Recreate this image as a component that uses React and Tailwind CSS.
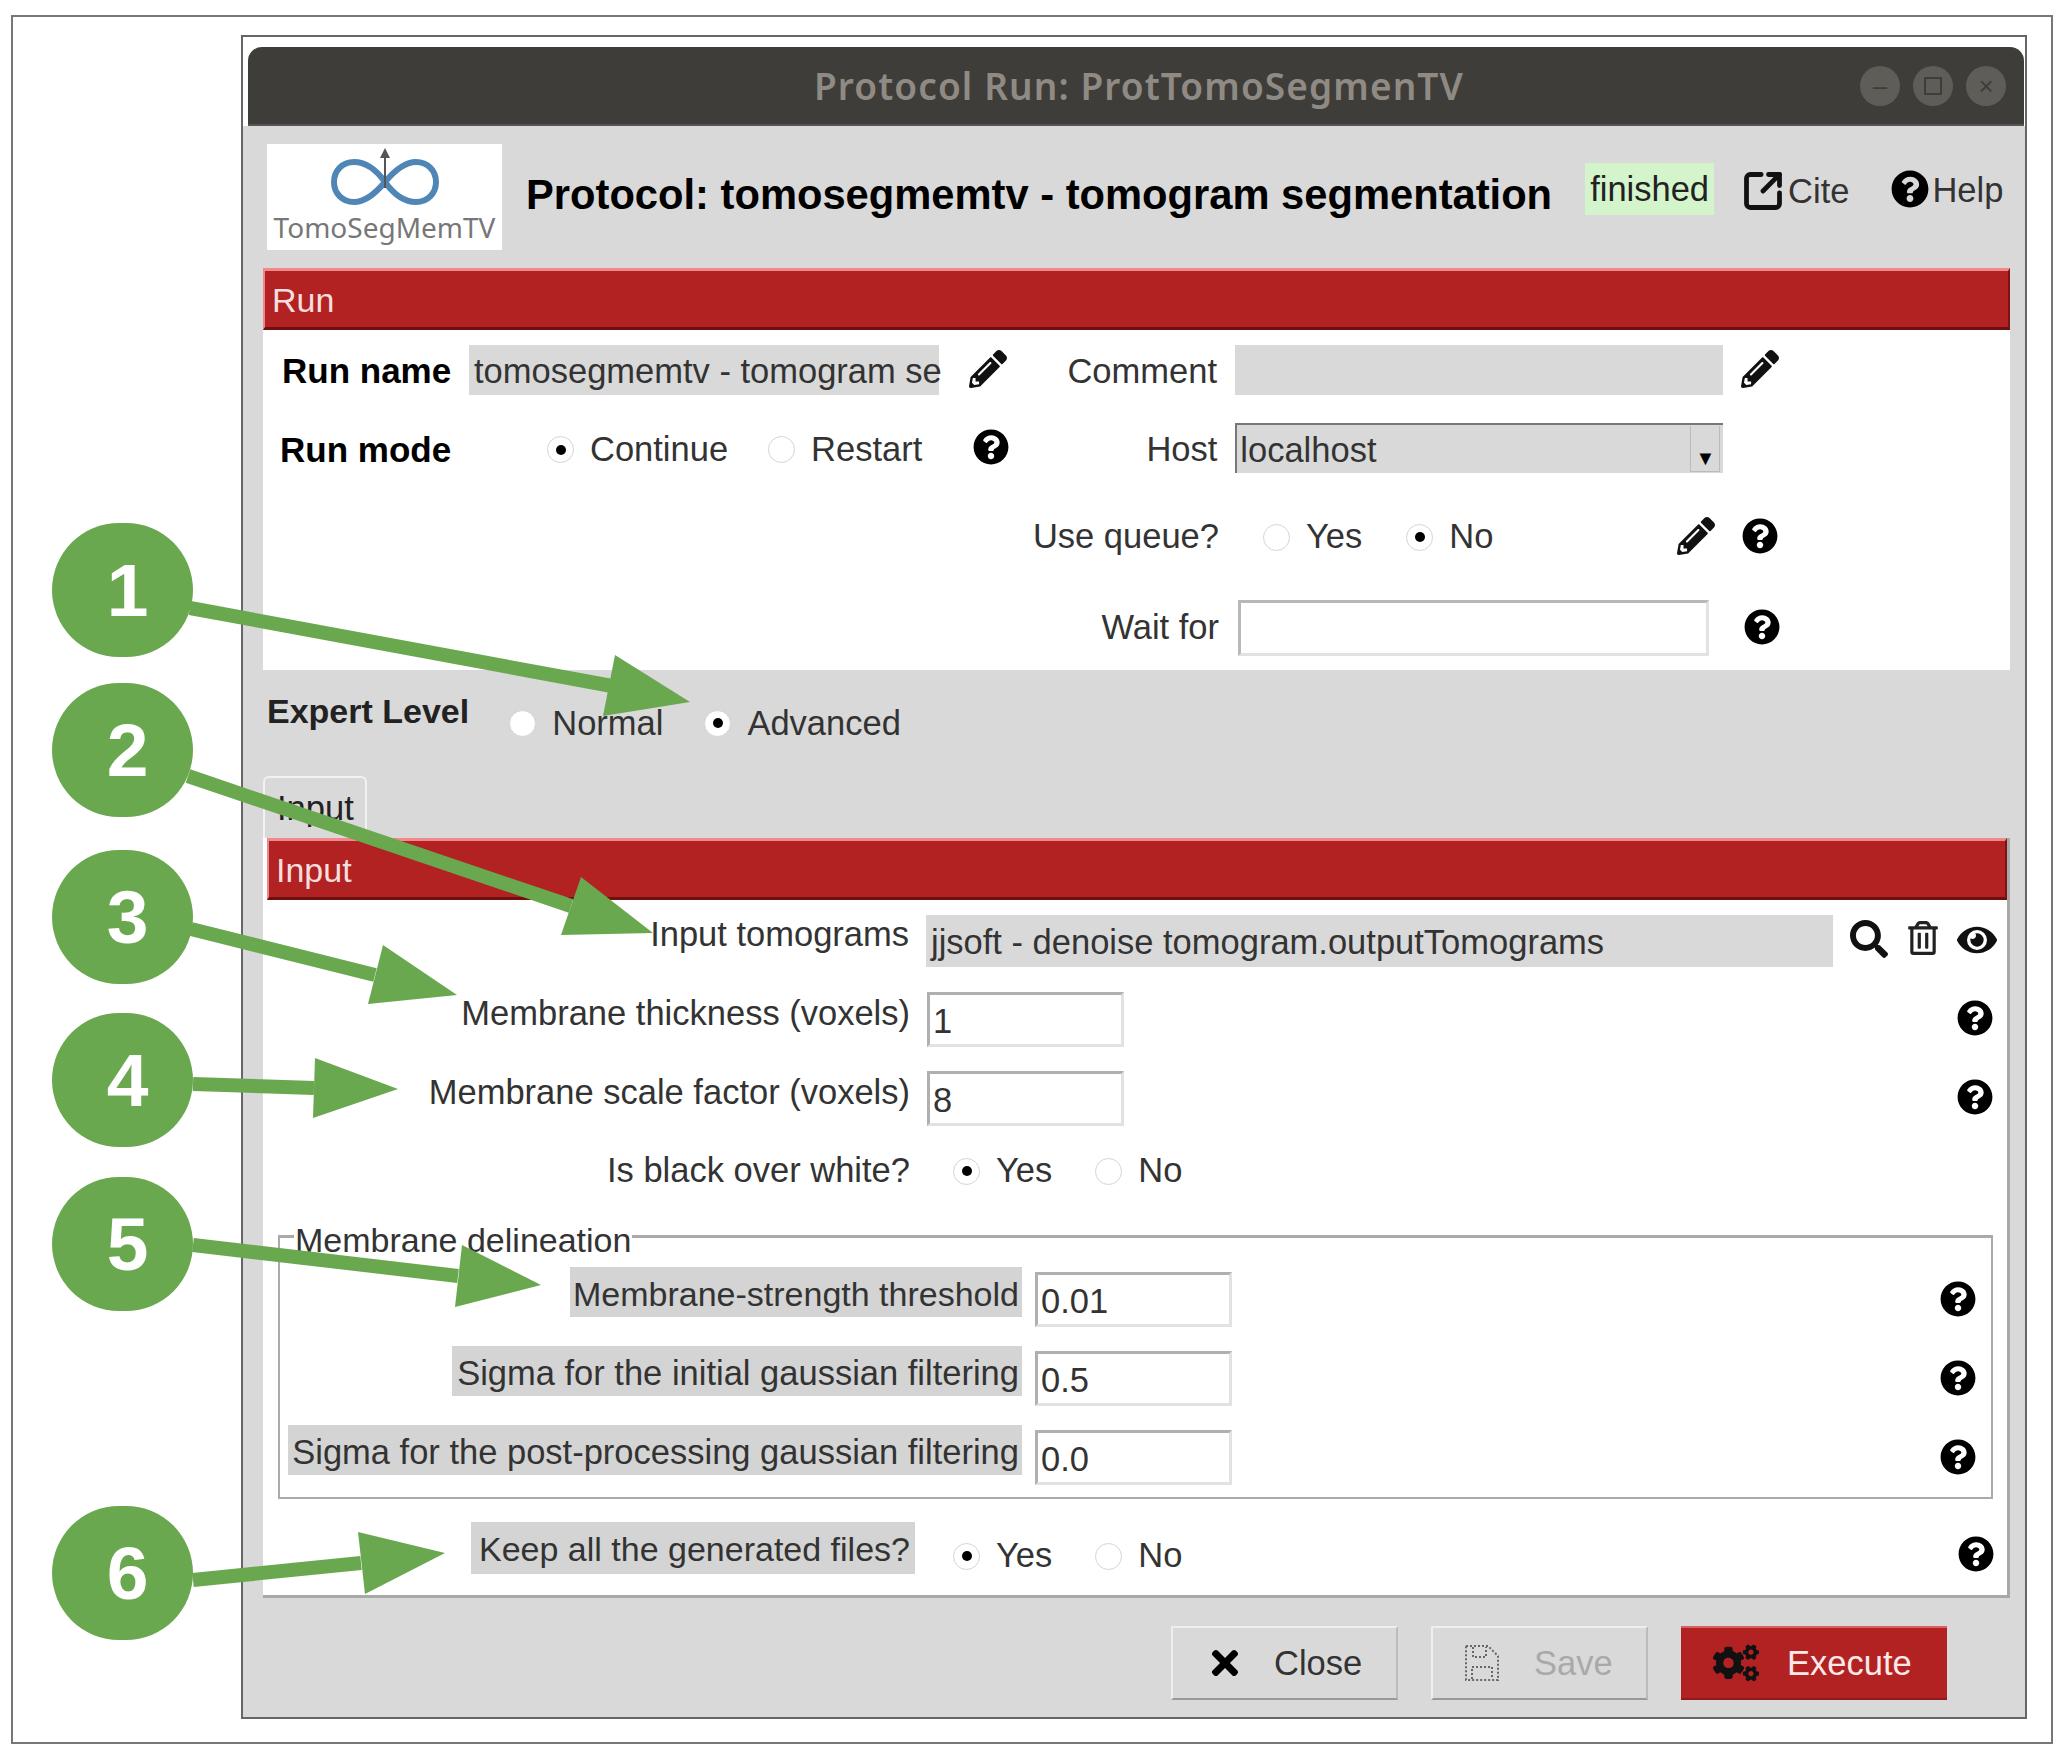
import React from 'react';
import { FaQuestionCircle, FaPencilAlt, FaSearch, FaRegTrashAlt, FaEye, FaTimes, FaCogs } from 'react-icons/fa';
import { SquareArrowOutUpRight } from 'lucide-react';

const GREEN = '#6aa84f';

const ARROWS = [
	{ line: [190, 608, 612, 686], head: '615,655 690,702 603,716' },
	{ line: [188, 776, 571, 906], head: '581,877 653,933 561,935' },
	{ line: [191, 929, 375, 975], head: '383,945 457,995 368,1004' },
	{ line: [193, 1084, 314, 1088], head: '315,1058 398,1089 313,1118' },
	{ line: [193, 1245, 458, 1276], head: '462,1245 541,1285 455,1307' },
	{ line: [193, 1580, 361, 1563], head: '358,1532 445,1553 365,1594' },
];

const BADGES = [
	{ n: 1, cls: 'top-[523px]' },
	{ n: 2, cls: 'top-[683px]' },
	{ n: 3, cls: 'top-[850px]' },
	{ n: 4, cls: 'top-[1013px]' },
	{ n: 5, cls: 'top-[1177px]' },
	{ n: 6, cls: 'top-[1506px]' },
];

function Help({ className = '' }) {
	return <FaQuestionCircle className={`text-[36px] text-black shrink-0 ${className}`} />;
}

function Pencil({ className = '' }) {
	return <FaPencilAlt className={`text-[38px] text-[#111] shrink-0 ${className}`} />;
}

function Radio({ checked, label, className = '' }) {
	return (
		<div className={`flex items-center gap-[16px] shrink-0 ${className}`}>
			<span className="w-[27px] h-[27px] rounded-full bg-white border border-[#d4d4d4] flex items-center justify-center shrink-0">
				{checked && <span className="w-[10px] h-[10px] rounded-full bg-black" />}
			</span>
			<span className="text-[#333]">{label}</span>
		</div>
	);
}

function NumInput({ value, className = '' }) {
	return (
		<div className={`w-[197px] h-[55px] bg-white border-[3px] border-t-[#b0b0b0] border-l-[#b0b0b0] border-b-[#e2e2e2] border-r-[#e2e2e2] pl-[3px] pt-[6px] text-[#333] leading-[40px] shrink-0 ${className}`}>
			{value}
		</div>
	);
}

function RedBar({ label, className = '' }) {
	return (
		<div className={`h-[62px] bg-[#b22222] border-t-[3px] border-t-[#f08a8a] border-b-[3px] border-b-[#6e1010] border-l-2 border-l-[#e88] border-r-2 border-r-[#7a1414] pl-[7px] text-[34px] leading-[58px] text-[#f6dede] ${className}`}>
			{label}
		</div>
	);
}

function Logo() {
	return (
		<div className="w-[235px] h-[106px] bg-white flex flex-col items-center shrink-0 overflow-hidden">
			<svg width="112" height="66" viewBox="0 0 112 66" className="shrink-0">
				<path d="M56 38 C46 24 36 18 25 18 C13 18 5 27 5 38 C5 49 13 58 25 58 C36 58 46 50 56 38 C66 26 76 18 87 18 C99 18 107 27 107 38 C107 49 99 58 87 58 C76 58 66 52 56 38 Z" fill="none" stroke="#4f86b5" strokeWidth="6" />
				<path d="M56 44 L56 8" stroke="#555" strokeWidth="2" />
				<path d="M51 14 L56 4 L61 14 Z" fill="#555" />
			</svg>
			<span className="font-['Noto_Sans',sans-serif] text-[28px] leading-[34px] text-[#777] whitespace-nowrap">TomoSegMemTV</span>
		</div>
	);
}

function SaveIcon() {
	return (
		<svg width="36" height="38" viewBox="0 0 36 38" fill="none" stroke="#666" strokeWidth="2" strokeDasharray="2 2" className="shrink-0">
			<path d="M2 2 H24 L34 12 V36 H2 Z" />
			<path d="M9 3 V13 H22 V3" />
			<path d="M8 35 V23 H28 V35" />
		</svg>
	);
}

export default function App() {
	return (
		<div className="relative w-[2065px] h-[1758px] bg-white overflow-hidden font-['Liberation_Sans',sans-serif] text-[34.5px] text-[#333]">
			<div className="ml-[11px] mt-[15px] w-[2042px] h-[1729px] border-2 border-[#777] bg-white pt-[18px] pl-[228px] float-left">
				<div className="w-[1786px] h-[1684px] border-2 border-[#666] bg-[#d9d9d9] flex flex-col">
					{/* Title bar */}
					<div className="bg-white pt-[10px] pl-[5px] pr-[1px]">
						<div className="h-[79px] bg-[#3f3d39] rounded-t-[14px] border-b-2 border-b-[#555] flex items-center pl-[566px] pr-[18px]">
							<span className="font-['Noto_Sans',sans-serif] font-semibold text-[37px] tracking-[1.1px] text-[#8f8b84] whitespace-nowrap">Protocol Run: ProtTomoSegmenTV</span>
							<div className="ml-auto flex gap-[13px]">
								<span className="w-[40px] h-[40px] rounded-full bg-[#5f5d58] flex items-center justify-center text-[#3f3d39] text-[26px] leading-none">–</span>
								<span className="w-[40px] h-[40px] rounded-full bg-[#5f5d58] flex items-center justify-center"><span className="w-[18px] h-[18px] border-2 border-[#3f3d39]" /></span>
								<span className="w-[40px] h-[40px] rounded-full bg-[#5f5d58] flex items-center justify-center text-[#3f3d39] text-[26px] leading-none">×</span>
							</div>
						</div>
					</div>

					{/* Header */}
					<div className="h-[142px] flex items-start pl-[24px] pt-[18px]">
						<Logo />
						<h1 className="ml-[24px] mt-[27px] text-[41.7px] leading-[48px] font-bold text-black whitespace-nowrap">Protocol: tomosegmemtv - tomogram segmentation</h1>
						<div className="ml-[33px] mt-[19px] w-[129px] h-[52px] bg-[#d4f4cc] flex items-center justify-center pt-[2px] text-[#222]">finished</div>
						<div className="ml-[27px] mt-[25px] flex items-center h-[44px]">
							<SquareArrowOutUpRight size={44} strokeWidth={2.6} className="text-[#111] shrink-0" />
							<span className="ml-[3px] pt-[2px]">Cite</span>
						</div>
						<div className="ml-[42px] mt-[23px] flex items-center h-[44px]">
							<Help className="text-[38px]" />
							<span className="ml-[3px] pt-[4px]">Help</span>
						</div>
					</div>

					{/* Run section */}
					<div className="ml-[20px] mr-[15px]">
						<RedBar label="Run" />
						<div className="h-[340px] bg-white pt-[15px] flex flex-col">
							<div className="flex h-[50px] items-center">
								<span className="w-[206px] pl-[19px] font-bold text-black text-[35px] pt-[2px]">Run name</span>
								<div className="w-[470px] h-[50px] bg-[#d9d9d9] pl-[5px] leading-[52px] whitespace-nowrap">tomosegmemtv - tomogram se</div>
								<div className="w-[81px] pl-[30px]"><Pencil className="-mt-[2px]" /></div>
								<span className="w-[197px] text-right pt-[3px]">Comment</span>
								<div className="ml-[18px] w-[488px] h-[50px] bg-[#d9d9d9]" />
								<Pencil className="ml-[18px] -mt-[2px]" />
							</div>
							<div className="flex h-[50px] items-center mt-[28px]">
								<span className="w-[190px] pl-[17px] font-bold text-black text-[35px] pt-[4px]">Run mode</span>
								<Radio checked label="Continue" className="ml-[94px] pt-[3px]" />
								<Radio label="Restart" className="ml-[40px] pt-[3px]" />
								<Help className="ml-[51px] -mt-[2px]" />
								<span className="ml-[58px] w-[150px] text-right pt-[4px]">Host</span>
								<div className="ml-[18px] w-[488px] h-[50px] bg-[#d9d9d9] border-t-2 border-l-2 border-[#777] flex items-center pl-[3px] relative">
									<span className="pt-[3px]">localhost</span>
									<div className="ml-auto mr-[3px] w-[30px] h-[46px] bg-[#d9d9d9] border-l border-r border-b border-[#bbb] flex items-end justify-center text-[20px] leading-[26px] text-black">▼</div>
								</div>
							</div>
							<div className="flex h-[50px] items-center mt-[39px]">
								<span className="ml-[759px] w-[197px] text-right">Use queue?</span>
								<Radio label="Yes" className="ml-[44px]" />
								<Radio checked label="No" className="ml-[44px]" />
								<Pencil className="ml-[184px] -mt-[2px]" />
								<Help className="ml-[27px] -mt-[3px]" />
							</div>
							<div className="flex h-[56px] items-center mt-[38px]">
								<span className="ml-[759px] w-[197px] text-right">Wait for</span>
								<div className="ml-[19px] w-[471px] h-[56px] bg-white border-[3px] border-t-[#b8b8b8] border-l-[#b8b8b8] border-b-[#e2e2e2] border-r-[#e2e2e2]" />
								<Help className="ml-[35px] -mt-[2px]" />
							</div>
						</div>
					</div>

					{/* Expert level */}
					<div className="h-[106px] ml-[24px] flex items-start">
						<span className="mt-[23px] font-bold text-[34px] text-[#222] leading-[36px]">Expert Level</span>
						<Radio label="Normal" className="ml-[40px] mt-[35px] leading-[36px]" />
						<Radio checked label="Advanced" className="ml-[41px] mt-[35px] leading-[36px]" />
					</div>

					{/* Tab */}
					<div className="ml-[20px] w-[104px] h-[62px] border-t-2 border-l-2 border-r-2 border-[#f2f2f2] rounded-t-[6px] pl-[12px] pt-[12px] leading-[36px] text-[#222]">Input</div>

					{/* Input panel */}
					<div className="ml-[20px] w-[1747px] h-[760px] bg-white border-b-[3px] border-r-[3px] border-[#a8a8a8] flex flex-col">
						<div className="pl-[4px]"><RedBar label="Input" /></div>
						<div className="flex h-[52px] mt-[15px]">
							<span className="w-[646px] text-right leading-[38px] whitespace-nowrap">Input tomograms</span>
							<div className="ml-[17px] w-[907px] h-[52px] bg-[#d9d9d9] pl-[5px] pt-[7px] leading-[40px] whitespace-nowrap">jjsoft - denoise tomogram.outputTomograms</div>
							<FaSearch className="ml-[17px] mt-[5px] text-[38px] text-[#111]" />
							<FaRegTrashAlt className="ml-[18px] mt-[6px] text-[34px] text-[#222]" />
							<FaEye className="ml-[17px] mt-[5px] text-[40px] text-[#111]" />
						</div>
						<div className="flex h-[55px] mt-[25px]">
							<span className="w-[647px] text-right leading-[42px] whitespace-nowrap">Membrane thickness (voxels)</span>
							<NumInput value="1" className="ml-[17px]" />
							<Help className="ml-[833px] mt-[8px]" />
						</div>
						<div className="flex h-[55px] mt-[24px]">
							<span className="w-[647px] text-right leading-[42px] whitespace-nowrap">Membrane scale factor (voxels)</span>
							<NumInput value="8" className="ml-[17px]" />
							<Help className="ml-[833px] mt-[8px]" />
						</div>
						<div className="flex h-[50px] items-center mt-[20px]">
							<span className="w-[647px] text-right whitespace-nowrap">Is black over white?</span>
							<Radio checked label="Yes" className="ml-[43px]" />
							<Radio label="No" className="ml-[43px]" />
						</div>

						{/* Group box */}
						<div className="ml-[15px] mt-[39px] w-[1715px] h-[264px] border-2 border-t-[3px] border-[#aaa] flex flex-col">
							<span className="ml-[14px] -mt-[18px] w-fit h-[40px] bg-white text-[34px] leading-[40px] px-[1px] whitespace-nowrap">Membrane delineation</span>
							<div className="flex h-[60px] mt-[7px]">
								<div className="ml-[290px] w-[452px] h-[50px] bg-[#d4d4d4] text-right text-[34px] pr-[3px] leading-[54px] whitespace-nowrap shrink-0">Membrane-strength threshold</div>
								<NumInput value="0.01" className="ml-[13px] mt-[5px]" />
								<Help className="ml-[708px] mt-[14px]" />
							</div>
							<div className="flex h-[60px] mt-[19px]">
								<div className="ml-[172px] w-[570px] h-[50px] bg-[#d4d4d4] text-right pr-[3px] leading-[54px] whitespace-nowrap shrink-0">Sigma for the initial gaussian filtering</div>
								<NumInput value="0.5" className="ml-[13px] mt-[5px]" />
								<Help className="ml-[708px] mt-[14px]" />
							</div>
							<div className="flex h-[60px] mt-[19px]">
								<div className="ml-[8px] w-[734px] h-[50px] bg-[#d4d4d4] text-right pr-[3px] leading-[54px] whitespace-nowrap shrink-0">Sigma for the post-processing gaussian filtering</div>
								<NumInput value="0.0" className="ml-[13px] mt-[5px]" />
								<Help className="ml-[708px] mt-[14px]" />
							</div>
						</div>

						{/* Keep files */}
						<div className="flex h-[52px] mt-[23px]">
							<div className="ml-[208px] w-[444px] h-[52px] bg-[#d4d4d4] text-right pr-[5px] text-[34px] leading-[54px] whitespace-nowrap shrink-0">Keep all the generated files?</div>
							<Radio checked label="Yes" className="ml-[38px] mt-[14px] h-[40px]" />
							<Radio label="No" className="ml-[43px] mt-[14px] h-[40px]" />
							<Help className="ml-auto mr-[13px] mt-[14px]" />
						</div>
					</div>

					{/* Buttons */}
					<div className="mt-[28px] flex pl-[928px] gap-[33px]">
						<button className="w-[227px] h-[74px] bg-[#d9d9d9] border-2 border-t-[#eee] border-l-[#eee] border-b-[#999] border-r-[#bbb] flex items-center pl-[33px] text-[#333]">
							<FaTimes className="text-[38px] text-black shrink-0" />
							<span className="ml-[30px] pt-[2px]">Close</span>
						</button>
						<button className="w-[217px] h-[74px] bg-[#d9d9d9] border-2 border-t-[#eee] border-l-[#eee] border-b-[#999] border-r-[#bbb] flex items-center pl-[31px] text-[#a9a9a9]">
							<SaveIcon />
							<span className="ml-[34px] pt-[2px]">Save</span>
						</button>
						<button className="w-[266px] h-[74px] bg-[#b22222] border-t-2 border-t-[#d86060] border-b-2 border-b-[#8e1a1a] flex items-center pl-[32px] text-[#fbe9e9]">
							<FaCogs className="text-[46px] text-[#111] shrink-0" />
							<span className="ml-[28px] pt-[2px]">Execute</span>
						</button>
					</div>
				</div>
			</div>

			{/* Annotations on top of the screenshot */}
			<svg className="absolute inset-0 pointer-events-none" width="2065" height="1758">
				{ARROWS.map((a, i) => (
					<g key={i}>
						<line x1={a.line[0]} y1={a.line[1]} x2={a.line[2]} y2={a.line[3]} stroke={GREEN} strokeWidth="14" />
						<polygon points={a.head} fill={GREEN} />
					</g>
				))}
			</svg>
			{BADGES.map((b) => (
				<div key={b.n} className={`absolute left-[52px] w-[141px] h-[134px] rounded-full bg-[#6aa84f] flex items-center justify-center pl-[10px] font-bold text-white text-[75px] leading-none ${b.cls}`}>
					{b.n}
				</div>
			))}
		</div>
	);
}
